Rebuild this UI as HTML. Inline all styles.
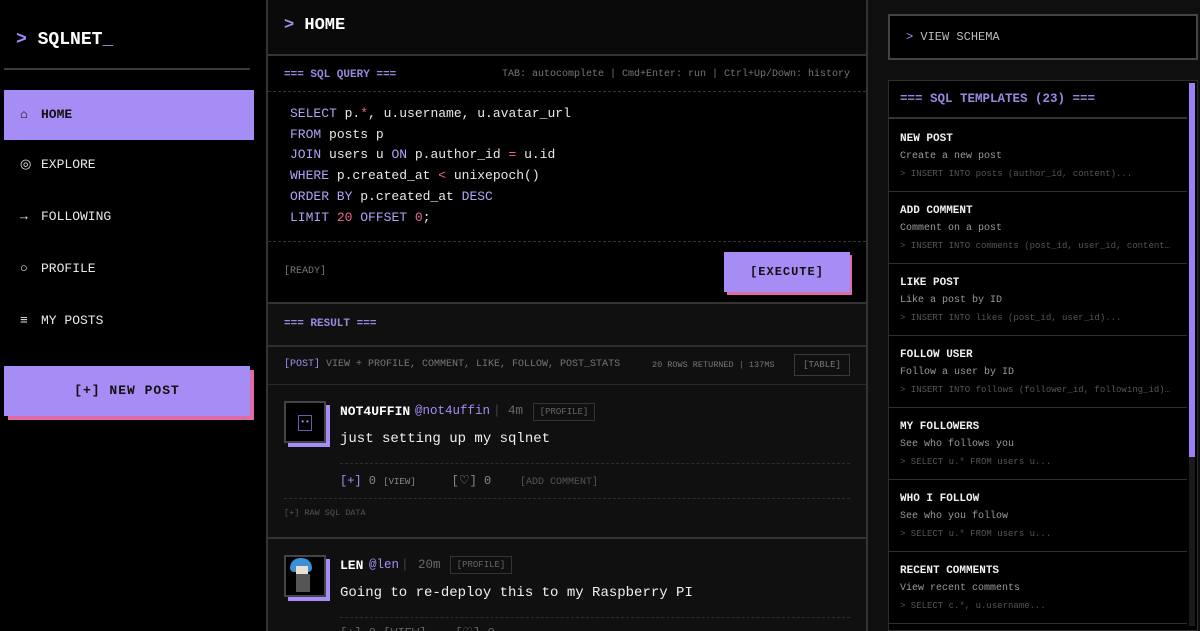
<!DOCTYPE html>
<html><head><meta charset="utf-8"><style>
*{box-sizing:border-box;margin:0;padding:0}
html,body{width:1200px;height:631px;overflow:hidden}
body{background:#000;font-family:"Liberation Mono",monospace;color:#e8e8e8;position:relative}
.a{position:absolute;white-space:nowrap}
.p{color:#a68cf5}
.k{color:#b3a2f7}
.r{color:#e86a8c}
.g{color:#6a6a6a}
.nav{left:4px;width:248px;height:50px;font-size:13px;line-height:50px;padding-left:16px}
.nav span{display:inline-block;width:21px}
.tpl{left:889px;width:298px;height:72px;border-bottom:1px solid #2e2e2e;padding:13px 0 0 11px}
.tpl b{display:block;font-size:11px;color:#f2f2f2;line-height:12px}
.tpl i{display:block;font-style:normal;font-size:10px;color:#9a9a9a;margin-top:6px;line-height:12px}
.tpl s{display:block;text-decoration:none;font-size:9px;color:#555;margin-top:5px;line-height:12px}
</style></head><body>
<!-- sidebar -->
<div class="a" style="left:16px;top:30px;font-size:18px;font-weight:bold;color:#fff"><span class="p">&gt;</span> SQLNET<span class="p">_</span></div>
<div class="a" style="left:4px;top:68px;width:246px;height:2px;background:#3a3a3a"></div>
<div class="a nav" style="top:90px;background:#a68cf5;color:#111;font-weight:bold;box-shadow:2px 0 0 #a68cf5"><span>⌂</span>HOME</div>
<div class="a nav" style="top:140px"><span>◎</span>EXPLORE</div>
<div class="a nav" style="top:192px"><span>→</span>FOLLOWING</div>
<div class="a nav" style="top:244px"><span>○</span>PROFILE</div>
<div class="a nav" style="top:296px"><span>≡</span>MY POSTS</div>
<div class="a" style="left:8px;top:370px;width:246px;height:50px;background:#e06aa8"></div>
<div class="a" style="left:4px;top:366px;width:246px;height:50px;background:#a68cf5;color:#111;font-weight:bold;font-size:13px;text-align:center;line-height:50px;letter-spacing:1px">[+] NEW POST</div>
<!-- main -->
<div class="a" style="left:266px;top:0;width:2px;height:631px;background:#333"></div>
<div class="a" style="left:866px;top:0;width:2px;height:631px;background:#333"></div>
<div class="a" style="left:268px;top:0;width:598px;height:56px;background:#0a0a0a;border-bottom:2px solid #333"></div>
<div class="a" style="left:284px;top:16px;font-size:17px;font-weight:bold;color:#fff"><span class="p">&gt;</span> HOME</div>
<div class="a" style="left:268px;top:56px;width:598px;height:246px;background:#000"></div>
<div class="a" style="left:284px;top:69px;font-size:11px;font-weight:bold;color:#9a88e0">=== SQL QUERY ===</div>
<div class="a" style="left:502px;top:69px;font-size:10px;color:#777">TAB: autocomplete | Cmd+Enter: run | Ctrl+Up/Down: history</div>
<div class="a" style="left:268px;top:91px;width:598px;border-top:1px dashed #333"></div>
<div class="a" style="left:290px;top:104px;font-size:13px;line-height:20.7px;color:#e8e8e8"><span class="k">SELECT</span> p.<span class="r">*</span>, u.username, u.avatar_url<br><span class="k">FROM</span> posts p<br><span class="k">JOIN</span> users u <span class="k">ON</span> p.author_id <span class="r">=</span> u.id<br><span class="k">WHERE</span> p.created_at <span class="r">&lt;</span> unixepoch()<br><span class="k">ORDER BY</span> p.created_at <span class="k">DESC</span><br><span class="k">LIMIT</span> <span class="r">20</span> <span class="k">OFFSET</span> <span class="r">0</span>;</div>
<div class="a" style="left:268px;top:241px;width:598px;border-top:1px dashed #333"></div>
<div class="a" style="left:284px;top:266px;font-size:10px;color:#777">[READY]</div>
<div class="a" style="left:727px;top:255px;width:125px;height:40px;background:#e06aa8"></div>
<div class="a" style="left:724px;top:252px;width:126px;height:40px;background:#a68cf5;color:#111;font-weight:bold;font-size:12px;text-align:center;line-height:40px;letter-spacing:1px">[EXECUTE]</div>
<div class="a" style="left:268px;top:302px;width:598px;height:2px;background:#333"></div>
<div class="a" style="left:268px;top:304px;width:598px;height:327px;background:#101010"></div>
<div class="a" style="left:268px;top:345px;width:598px;height:2px;background:#2e2e2e"></div>
<div class="a" style="left:284px;top:318px;font-size:11px;font-weight:bold;color:#9a88e0">=== RESULT ===</div>
<div class="a" style="left:284px;top:359px;font-size:10px;color:#777"><span class="p">[POST]</span> VIEW + PROFILE, COMMENT, LIKE, FOLLOW, POST_STATS</div>
<div class="a" style="left:652px;top:360px;font-size:8.5px;color:#777">20 ROWS RETURNED | 137MS</div>
<div class="a" style="left:794px;top:354px;width:56px;height:22px;border:1px solid #3a3a3a;font-size:9px;color:#777;text-align:center;line-height:20px">[TABLE]</div>
<div class="a" style="left:268px;top:384px;width:598px;height:1px;background:#2a2a2a"></div>
<!-- post 1 -->
<div class="a" style="left:288px;top:405px;width:42px;height:42px;background:#a68cf5"></div>
<div class="a" style="left:284px;top:401px;width:42px;height:42px;background:#000;border:2px solid #444"></div>
<div class="a" style="left:298px;top:415px;width:14px;height:16px;border:1px solid #6a5aa8;font-size:8px;color:#a68cf5;text-align:center;line-height:14px">••</div>
<div class="a" style="left:340px;top:404px;font-size:13px;font-weight:bold;color:#fff">NOT4UFFIN</div>
<div class="a p" style="left:415px;top:404px;font-size:12.5px">@not4uffin</div>
<div class="a" style="left:493px;top:403px;font-size:13px;color:#444">|</div>
<div class="a g" style="left:508px;top:404px;font-size:12.5px">4m</div>
<div class="a" style="left:533px;top:403px;width:62px;height:18px;border:1px solid #333;font-size:9px;color:#666;text-align:center;line-height:16px">[PROFILE]</div>
<div class="a" style="left:340px;top:431px;font-size:14px;color:#f0f0f0">just setting up my sqlnet</div>
<div class="a" style="left:340px;top:463px;width:510px;border-top:1px dashed #2e2e2e"></div>
<div class="a" style="left:340px;top:473px;font-size:12px;color:#888"><span class="p">[+]</span> 0 <span style="font-size:9px">[VIEW]</span>&nbsp;&nbsp;&nbsp;&nbsp;&nbsp;[♡] 0&nbsp;&nbsp;&nbsp;&nbsp;<span style="font-size:10px;color:#555">[ADD COMMENT]</span></div>
<div class="a" style="left:284px;top:498px;width:566px;border-top:1px dashed #2e2e2e"></div>
<div class="a" style="left:284px;top:508px;font-size:8.5px;color:#555">[+] RAW SQL DATA</div>
<div class="a" style="left:268px;top:537px;width:598px;height:2px;background:#333"></div>
<!-- post 2 -->
<div class="a" style="left:288px;top:559px;width:42px;height:42px;background:#a68cf5"></div>
<div class="a" style="left:284px;top:555px;width:42px;height:42px;background:#000;border:2px solid #444"></div>
<div class="a" style="left:290px;top:558px;width:22px;height:14px;background:#3a8fd8;border-radius:10px 10px 4px 4px"></div>
<div class="a" style="left:296px;top:566px;width:12px;height:8px;background:#e8e0d0"></div>
<div class="a" style="left:296px;top:574px;width:14px;height:18px;background:#555"></div>
<div class="a" style="left:340px;top:558px;font-size:13px;font-weight:bold;color:#fff">LEN</div>
<div class="a p" style="left:369px;top:558px;font-size:12.5px">@len</div>
<div class="a" style="left:401px;top:557px;font-size:13px;color:#444">|</div>
<div class="a g" style="left:418px;top:558px;font-size:12.5px">20m</div>
<div class="a" style="left:450px;top:556px;width:62px;height:18px;border:1px solid #333;font-size:9px;color:#666;text-align:center;line-height:16px">[PROFILE]</div>
<div class="a" style="left:340px;top:585px;font-size:14px;color:#f0f0f0">Going to re-deploy this to my Raspberry PI</div>
<div class="a" style="left:340px;top:617px;width:510px;border-top:1px dashed #2e2e2e"></div>
<div class="a" style="left:340px;top:625px;font-size:12px;color:#666">[+] 0 [VIEW]&nbsp;&nbsp;&nbsp;&nbsp;[♡] 0</div>
<!-- right -->
<div class="a" style="left:868px;top:0;width:332px;height:631px;background:#0f0f0f"></div>
<div class="a" style="left:888px;top:14px;width:310px;height:46px;background:#000;border:2px solid #444;font-size:12px;color:#bbb;line-height:42px;padding-left:16px"><span class="p">&gt;</span> VIEW SCHEMA</div>
<div class="a" style="left:888px;top:80px;width:310px;height:551px;background:#000;border:1px solid #2e2e2e"></div>
<div class="a" style="left:1189px;top:83px;width:6px;height:543px;background:#1a1a1a"></div>
<div class="a" style="left:1189px;top:83px;width:6px;height:374px;background:#9a80f0"></div>
<div class="a" style="left:889px;top:81px;width:298px;height:38px;border-bottom:2px solid #333;font-size:12.5px;font-weight:bold;color:#9a88e0;padding:11px 0 0 11px">=== SQL TEMPLATES (23) ===</div>
<div class="a tpl" style="top:120px"><b>NEW POST</b><i>Create a new post</i><s>&gt; INSERT INTO posts (author_id, content)...</s></div>
<div class="a tpl" style="top:192px"><b>ADD COMMENT</b><i>Comment on a post</i><s>&gt; INSERT INTO comments (post_id, user_id, content…</s></div>
<div class="a tpl" style="top:264px"><b>LIKE POST</b><i>Like a post by ID</i><s>&gt; INSERT INTO likes (post_id, user_id)...</s></div>
<div class="a tpl" style="top:336px"><b>FOLLOW USER</b><i>Follow a user by ID</i><s>&gt; INSERT INTO follows (follower_id, following_id)…</s></div>
<div class="a tpl" style="top:408px"><b>MY FOLLOWERS</b><i>See who follows you</i><s>&gt; SELECT u.* FROM users u...</s></div>
<div class="a tpl" style="top:480px"><b>WHO I FOLLOW</b><i>See who you follow</i><s>&gt; SELECT u.* FROM users u...</s></div>
<div class="a tpl" style="top:552px"><b>RECENT COMMENTS</b><i>View recent comments</i><s>&gt; SELECT c.*, u.username...</s></div>
</body></html>
